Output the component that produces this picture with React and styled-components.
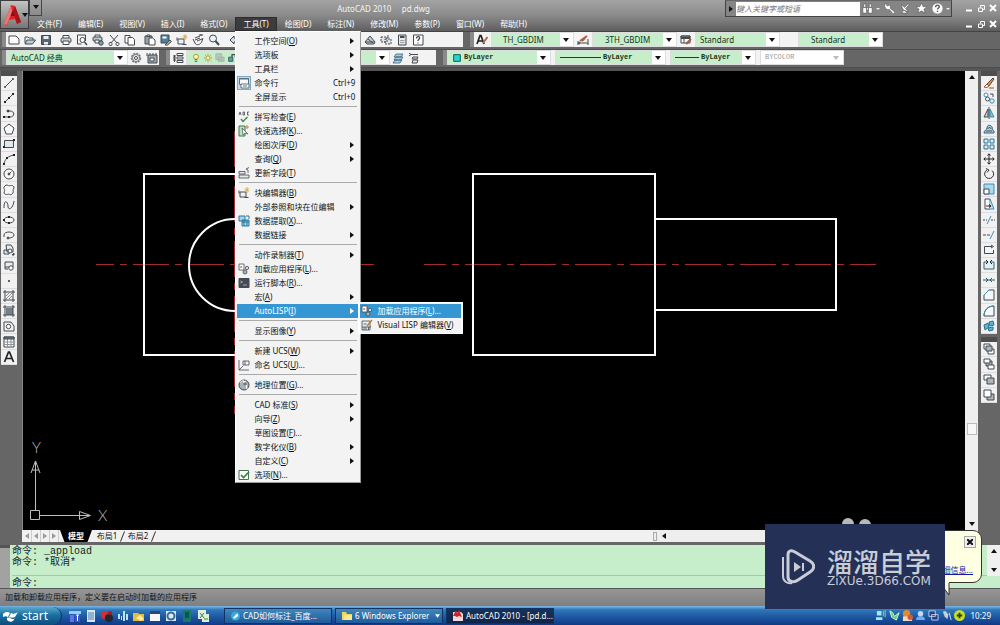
import React from "react";
import styled, { createGlobalStyle, css } from "styled-components";

const ui = '"Noto Sans", "Noto Sans CJK SC", sans-serif';
const mono = '"Liberation Mono", "Noto Sans CJK SC", monospace';
const green = "#c6eecb";
const gray = "#666666";

const GlobalStyle = createGlobalStyle`
  * { box-sizing: border-box; }
  body { margin: 0; background: ${gray}; font: 8px/14px ${ui}; color: #111; }
  button, input, select { font: inherit; color: inherit; border: 0; padding: 0; margin: 0; background: none; border-radius: 0; }
  ul { list-style: none; margin: 0; padding: 0; }
  svg { display: block; flex: none; }
`;

/* ---------- icons, each on a 12 x 12 grid ---------- */
const D = "#454a50";
const B = "#3d8fb8";
const icons = {
  new: <path d="M1 2h7l3 3v5H1z" fill="#fff" />,
  open: <><path d="M1 9V3h3l1 1h4v2" fill="none" /><path d="M1 10l2-4h8.500l-3 4z" fill="#b9cfdd" /></>,
  save: <><path d="M1.500 1.500h9v9h-9z" fill="#5b6670" /><path d="M3.500 2h5v3h-5zM4 8h4v2.500H4z" fill="#e8eef2" stroke="none" /></>,
  print: <><path d="M3 4V1.500h6V4" fill="#fff" /><rect x="1" y="4" width="10" height="4.500" rx="1.500" fill="#c9d0d4" /><path d="M3 7h6v3.500H3z" fill="#fff" /></>,
  preview: <><path d="M1.500 1h8v6M1.500 1v9h4" fill="none" /><circle cx="6.500" cy="6" r="2.500" fill="#fff" /><path d="M8.500 8l2.500 3" strokeWidth="1.500" /></>,
  publish: <><path d="M3 3V1h5v2" fill="#fff" /><rect x="1" y="3" width="9" height="4" rx="1" fill="#bcc6cc" /><path d="M3 6h4v3H3z" fill="#fff" /><circle cx="9" cy="9" r="2.200" fill="#6fa7bd" /></>,
  cut: <path d="M2 1l7 8M10 1L3 9M1 10.500a1.500 1.500 0 103-1 1.500 1.500 0 10-3 1M8 9.500a1.500 1.500 0 103 1 1.500 1.500 0 10-3-1" fill="none" />,
  copy: <><path d="M1 1.500h5v7.500H1z" fill="#fff" /><path d="M4 3.500h4.500l2 2V11H4z" fill="#fff" /></>,
  paste: <><path d="M1 2h7v8H1z" fill="#9aa4a8" /><path d="M3 1h3v1.500H3z" fill="#fff" /><path d="M5 4h3.500l2.500 2v5H5z" fill="#fff" /></>,
  match: <><path d="M1 1h8v8H1z" fill="#4c7fa0" /><path d="M2.500 2.500h4v2h-4z" fill="#fff" stroke="none" /><path d="M5 11l5-5 1.500 1.500-4 3.500z" fill="#d9b96c" /></>,
  block: <><path d="M2 5h6v5H2zM1 3.500v3M6.500 10.500h4" fill="#eef1f2" /><path d="M9 0v6M6.500 3h5M7.500 1l3 4M10.500 1l-3 4" stroke="#dca647" strokeWidth=".8" /></>,
  hand: <path d="M1 5l2 4c1 3 6 2 7-2l1-3M3 6l5-2M3 4l5-2M5 7l5-2M7 1h4M9 0v2" fill="none" />,
  zoom: <><circle cx="5" cy="4.500" r="3.500" fill="#e8f3f8" /><path d="M7.500 7l3.500 4" strokeWidth="2" /></>,
  undo: <path d="M6 2L2 6l4 4V8h4V4H6z" fill="#d0dde4" />,
  sheets: <><path d="M1 8l5-6 5 6-1 2H3z" fill="#c2cbce" /><path d="M1 8h9M4 5l5 4" fill="none" /></>,
  markup: <><path d="M1 3h6v5H1zM5 5h6v5H5z" fill="#dfe5e8" strokeDasharray="2 1" /><path d="M8 1v3" /></>,
  calc: <><path d="M2.500 1h7.500v10H2.500z" fill="#e5e9ea" /><path d="M4 3h4.500" strokeWidth="2" /><path d="M4 6.500h4.500M4 8.500h4.500" stroke="#9aa0a4" /></>,
  help: <><path d="M1.500 1h9.500v10H1.500z" fill="#fff" /><path d="M4.500 4.500c0-3 4-2 3 0L6 6.500V7M6 8.500v1" fill="none" strokeWidth="1.300" /></>,
  textstyle: <><path d="M1 10L4 1.500h1L8 10M2.500 7h4" fill="none" strokeWidth="1.700" stroke="#222" /><path d="M7 9l4.500-6" stroke="#b3703c" strokeWidth="2" /></>,
  dimstyle: <><path d="M1 7v4M11 5v6M1 9h10M1 9l2-1M1 9l2 1" fill="none" /><path d="M3 7l7-5M5 7l3-3" stroke="#b05e42" strokeWidth="2" /></>,
  tablestyle: <><path d="M1 2h9v7H1zM1 4.500h9M4 4v5" fill="#fff" /><path d="M1 2h9v1.500H1z" fill="#7d868b" /><path d="M6 10l5-5" stroke="#9a613f" strokeWidth="2" /></>,
  gear: <><circle cx="6" cy="6" r="4.500" fill="#ddd" strokeWidth="1.500" stroke="#777c80" strokeDasharray="2 1" /><circle cx="6" cy="6" r="3.500" fill="#f4f4f4" strokeWidth=".7" /><circle cx="6" cy="6" r="1.500" fill="#fff" /></>,
  workspace: <><path d="M2 3h9v8H2z" fill="#9da9ae" /><path d="M1 1v3M4 1v2M7 1v2M10 1v2M4 6h4v3H4z" fill="#fff" /></>,
  layers: <><path d="M5 1.500h6v2H5zM5 5h6v2H5zM5 8.500h6v2H5z" fill="#fff" /><path d="M1 4h3M1 6h3M1 8h3M2.500 3v7" /></>,
  layerprev: <><path d="M4 2h7l-2 3H2zM4 5h7l-2 3H2zM3 8h7l-2 3H1z" fill="#a9cddd" stroke="#35627b" strokeWidth=".8" /></>,
  layerstate: <path d="M1 1l2 1.500L1 4M3 2.500h7M5 5h5l-1 2H4zM5 8h5l-1 3H4z" fill="#e3e8ea" />,
  bulb: <><circle cx="6" cy="4.500" r="3" fill="#fff3a6" stroke="#a08a3c" /><path d="M4.500 8h3M4.500 10h3" /></>,
  sun: <><circle cx="6" cy="6" r="2.500" fill="#fff09a" stroke="#ad8b35" /><path d="M6 1v1.500M6 9.500V11M1 6h1.500M9.500 6H11M2.500 2.500l1 1M9 9l1 1M9.500 2.500l-1 1M2.500 9.500l1-1" stroke="#ad8b35" /></>,
  freeze: <path d="M1 1h7v7H1zM4 5h7v5H4z" fill="#b7c9ba" stroke="#a5afa8" />,
  lock: <><path d="M2 5h5v5H2z" fill="#4da5b5" /><path d="M6 5V2h4v3" fill="none" strokeWidth="1.500" /></>,
  cyan: <path d="M2 2h8v8H2z" fill="#25d6d0" stroke="#063f40" />,
  line: <><path d="M2 10l8-8" /><circle cx="2" cy="10" r="1" fill={D} stroke="none" /><circle cx="10" cy="2" r="1" fill={D} stroke="none" /></>,
  xline: <><path d="M1 11L11 1" /><path d="M1 9h2v2H1zM5 5h2v2H5zM9 1h2v2H9z" fill="#222" stroke="none" /></>,
  pline: <><path d="M1 9h6c5 0 5-6 0-6H5" fill="none" /><path d="M0 8h2v2H0zM5 8h2v2H5z" fill="#222" stroke="none" /><circle cx="5" cy="3" r="1" /></>,
  polygon: <path d="M6 1l5 4-2 6H3L1 5z" fill="#f8fafa" />,
  rect: <><path d="M1.500 2.500h9v7h-9z" fill="#dfe8ea" /><path d="M0 8h2v2H0zM10 1h2v2h-2z" fill="#222" stroke="none" /></>,
  arc: <><path d="M1 11c1-5 4-8 10-9" fill="none" /><path d="M0 10h2v2H0zM3 4h2v2H3zM10 1h2v2h-2z" fill="#222" stroke="none" /></>,
  circle: <><circle cx="6" cy="6" r="5" fill="#fafafa" /><circle cx="6" cy="6" r="1" fill={D} /><path d="M6 6l2.500-2.500" /></>,
  cloud: <path d="M3 1c2 0 3 1 3 1s5-2 5 2c-2 2 0 3-1 5-2 3-4 1-4 1s-5 2-5-2c2-2-1-3 0-5z" fill="#f6f6f6" />,
  spline: <path d="M1 9c0-10 4-6 4-2 0 5 5 3 6-5" fill="none" />,
  ellipse: <><ellipse cx="6" cy="6" rx="5" ry="3" fill="#f4f6f8" /><path d="M5 2h2v2H5zM0 5h2v2H0zM5 8h2v2H5z" fill="#222" stroke="none" /></>,
  ellarc: <><path d="M1 6c0-4 10-4 10 0 0 2-3 3-5 3M1 6v2" fill="none" /><circle cx="5" cy="9" r="1" fill="#777" /></>,
  insert: <><path d="M3 1h5l2 3v4H4zM1 6h5v4H1z" fill="#e7edef" /><circle cx="7" cy="7" r="2" fill="#fff" /><path d="M9 11h2V9z" fill="#111" /></>,
  makeblock: <><path d="M2 2h8v5H2zM2 7v2h3" fill="#e7edef" /><circle cx="8" cy="8" r="2.200" fill="#fff" /></>,
  point: <circle cx="6" cy="6" r=".7" fill={D} />,
  hatch: <><path d="M2 0v12M10 0v12M0 2h12M0 10h12" fill="none" /><path d="M3 9l6-6M3 6l3-3M6 9l3-3" stroke="#8a9095" /></>,
  gradient: <><path d="M3 3h7v7H3z" fill="#788085" stroke="none" /><path d="M2 0v12M10 0v12M0 2h12M0 10h12" fill="none" /></>,
  region: <><path d="M1 2h7l3 4v5H1z" fill="#f2f4f4" /><circle cx="5.500" cy="6.500" r="2.200" fill="#fff" /></>,
  table: <><path d="M1 1h10v10H1z" fill="#fff" /><path d="M1 6h10M1 8.500h10M4.500 3v8M8 3v8" stroke="#8d959a" /><path d="M1 1h10v2H1z" fill="#6f7b82" /></>,
  text: <path d="M1.500 11L5.500 1h1l4 10M3 7.500h6" fill="none" stroke="#222" strokeWidth="1.700" />,
  erase: <><path d="M4 7l6-6 1 1-5 7z" fill="#c99d67" stroke="#6b4023" /><path d="M1 10l3-3 2 2-2 1.500zM6 11h5" fill="#fff" stroke="#9b4b31" /></>,
  dupe: <><circle cx="3" cy="3" r="2" fill="#fff" stroke={B} /><circle cx="4.500" cy="7" r="2" fill="#fff" /><circle cx="9" cy="9" r="2.200" fill="#d8eef7" stroke={B} /><path d="M7 2h3v3" fill="none" /></>,
  mirror: <><path d="M5 2v8H1z" fill="#ccd3d6" /><path d="M7 2v8h4z" fill="#85c0d8" stroke={B} /><path d="M6 0v12" /></>,
  offset: <><path d="M1 10h10V8c-2 0-1-2-2-4S4 1 4 5c0 2-3 2-3 5z" fill="#a9cfdd" stroke="#386378" /><path d="M3 8h6M5 6c0-2 3-2 3 0" fill="none" /></>,
  array: <path d="M1 1h4v4H1zM7 1h4v4H7zM1 7h4v4H1zM7 7h4v4H7z" fill="#d5ecf4" stroke="#2f7798" />,
  move: <path d="M6 1v10M1 6h10M4.500 2.500L6 .8l1.500 1.700M4.500 9.500L6 11.200l1.500-1.700M2.500 4.500L.8 6l1.700 1.500M9.500 4.500L11.200 6 9.500 7.500" fill="none" stroke="#222" />,
  rotate: <path d="M4 2a4.500 4.500 0 105 .5M3 .5l3 1.500-2 2.500" fill="none" stroke="#333" />,
  scale: <><path d="M1 1h10v10H1z" fill="#a9d9ec" stroke={B} /><path d="M1 6h5v5H1z" fill="#fff" /></>,
  stretch: <><path d="M2 1h5v10H2z" fill="#fff" /><path d="M7 1l4 10H6" fill="#bfe2ef" stroke={B} /><path d="M3 8h5M6 6.500L8 8 6 9.500" fill="none" stroke="#222" /></>,
  trim: <><path d="M0 6h4M8 6h4" stroke={D} strokeDasharray="2 1" /><path d="M4 10l4-8" stroke={B} /></>,
  extend: <><path d="M0 6h7" strokeDasharray="3 1" /><path d="M7 10l4-8" stroke={B} /></>,
  breakpt: <path d="M9 2.500H1.500v7h9V6M8 1l2.500 1.500L8 4" fill="#eef6f9" />,
  brk: <><path d="M4 3H1v7h10V3H8" fill="#dff0f6" stroke="#43606e" /><path d="M3 1l2 2-2 2M9 1L7 3l2 2" fill="none" stroke="#222" /></>,
  join: <path d="M0 6h12M3 4l2 2-2 2M9 4L7 6l2 2" fill="none" stroke="#235b77" />,
  chamfer: <><path d="M1 11V6l5-5h5v10z" fill="#f3f8fa" /><path d="M1 6l5-5" stroke={B} /></>,
  fillet: <><path d="M1 11c0-6 4-10 10-10v10z" fill="#f3f8fa" /><path d="M1 11C1 5 5 1 11 1" fill="none" stroke={B} /></>,
  explode: <><path d="M1 5l4-2 1 4-4 3zM6 2l4-1 1 4-4 1zM5 8l5-1v3l-4 1z" fill="#62b3d2" stroke="#286f90" /></>,
  front: <><path d="M1 1h6v5H1zM5 6h6v5H5z" fill="#fff" /><path d="M3 3h6v5H3z" fill="#aeb6ba" /></>,
  back: <><path d="M3 3h6v5H3z" fill="#aeb6ba" /><path d="M1 1h6v4H1zM5 7h6v4H5z" fill="#fff" /></>,
  above: <><path d="M1 1h7v5H1z" fill="#fff" /><path d="M4 4h7v6H4z" fill="#aeb6ba" /></>,
  under: <><path d="M4 5h7v6H4z" fill="#aeb6ba" /><path d="M1 1h7v7H1z" fill="#fff" /></>,
  cmdline: <><path d="M1.500 1.500h9v6h-9z" fill="#f4f8fa" stroke="#5d7380" /><path d="M1 1h10v1.500H1z" fill="#5d7380" stroke="none" /><path d="M3 7h8v4H3z" fill="#fff" stroke="#5d7380" /><path d="M5 9h4" stroke="#5d7380" /></>,
  spell: <><path d="M3 8l2 2.500L9.500 6" fill="none" stroke="#438b46" strokeWidth="1.500" /><path d="M1 4l1-3 1 3M5 1h1.500v3H5zM11 1H9.500v3H11" fill="none" strokeWidth=".8" /></>,
  quick: <><path d="M1 1h6v10H1z" fill="#b9e4c0" stroke="#377b4c" /><path d="M4 3l1 7 2-2 3 1z" fill="#fff" strokeWidth=".7" /><path d="M9 0v4M7 2h4" stroke="#c88c2d" /></>,
  update: <path d="M1 4.500h6v2.500H1zM1 8h10v3H1zM10 6V3L8 2l3-1.500" fill="#e5e9eb" strokeWidth=".8" />,
  extract: <><path d="M1 1h6v5H1zM4 5h7v6H4z" fill="#a4d4ea" stroke="#2878a0" /><path d="M4 7h7M6 5v6M9 5v6M8 1h3v3" fill="none" stroke="#2878a0" /></>,
  loadapp: <><path d="M1 1h5v6H1z" fill="#fff" strokeWidth=".8" /><path d="M2.500 3l2 1-2 1z" fill={D} stroke="none" /><circle cx="9" cy="5" r="1.700" fill="#d5dce0" strokeWidth=".8" /><circle cx="7" cy="9" r="2" fill="#aab4ba" strokeWidth=".8" /></>,
  script: <><path d="M1 1.500h10v9H1z" fill="#454b50" /><path d="M2.500 4l2 1-2 1M5 8h4" fill="none" stroke="#bbb" strokeWidth=".8" /></>,
  ucs: <path d="M1 1v10h10M1 11l4-4M5 2h6v4H5zM7 2v4" fill="none" strokeWidth=".8" />,
  geo: <><circle cx="6" cy="6" r="5" fill="#a7b5b8" /><path d="M2 4c2-4 6-2 4 0l2 2 1 4M5 3l3-1" fill="none" stroke="#fff" /><circle cx="7" cy="5" r="1" fill="#fff" /></>,
  options: <><path d="M1 1.500h9.500v9H1z" fill="#f8fff8" stroke="#4c6f52" /><path d="M3 6l2.500 2.500L11 3" fill="none" stroke="#268636" strokeWidth="1.600" /></>,
  vlisp: <><path d="M1 2h8v9H1z" fill="#e9ecef" strokeWidth=".8" /><path d="M1 8h9M3 8v3M5 8v3M7.500 8v3M2.500 5h3" strokeWidth=".8" /><path d="M6 7l5-6" stroke="#b68231" strokeWidth="1.500" /></>,
};

const Icon = ({ name, size = 12 }) => (
  <svg width={size} height={size} viewBox="0 0 12 12" stroke={D} strokeWidth="1" aria-hidden="true">
    {icons[name]}
  </svg>
);
const Arrow = ({ dir = "down", color = "#111" }) => {
  const d = { down: "M0 1h6L3 5z", right: "M1 0v6l4-3z", left: "M5 0v6L1 3z", up: "M0 5h6L3 1z" }[dir];
  return <svg width="6" height="6" viewBox="0 0 6 6" aria-hidden="true"><path d={d} fill={color} /></svg>;
};

/* ---------- page ---------- */
const Page = styled.div`
  position: relative;
  display: flex;
  flex-direction: column;
  min-height: 100vh;
  overflow: hidden;
`;

/* ---------- header ---------- */
const Header = styled.header`
  position: relative;
  z-index: 5;
  display: flex;
  background: linear-gradient(#a3a3a3, #8a8a8a 50%, #5e5e5e);
  border-bottom: 1px solid #444;
`;
const AppButton = styled.button`
  width: 29px;
  height: 29px;
  display: grid;
  grid-template-columns: 18px 6px;
  align-items: center;
  gap: 1px;
  padding-left: 2px;
  background: linear-gradient(#c3c3c3, #777);
  border: 1px solid #3d3d3d;
`;
const HeaderRows = styled.div`flex: 1; min-width: 0;`;
const TitleRow = styled.div`display: flex; height: 17px; align-items: flex-start;`;
const QuickButton = styled.button`
  width: 13px;
  height: 16px;
  display: flex;
  justify-content: center;
  padding-top: 4px;
  border: 1px solid #444;
  border-top: 0;
`;
const Title = styled.h1`
  flex: 1;
  margin: 0;
  text-align: center;
  font: 400 8px/17px ${ui};
  color: #f4f4f4;
  white-space: pre;
`;
const InfoCenter = styled.div`
  display: flex;
  height: 17px;
  width: 227px;
  align-items: center;
  background: #858585;
  border: 1px solid #444;
  border-top-color: #666;
`;
const InfoToggle = styled.button`width: 10px; display: flex; justify-content: center;`;
const Search = styled.input`
  flex: 1;
  min-width: 0;
  height: 14px;
  background: #fff;
  &::placeholder { color: #777; font-style: italic; opacity: 1; }
`;
const InfoIcons = styled.div`display: flex; align-items: center; gap: 4px; padding: 0 1px 0 2px;`;
const InfoButton = styled.button`
  width: ${(p) => (p.$more ? 18 : 12)}px;
  height: 14px;
  display: flex;
  align-items: center;
  gap: 3px;
  ${(p) => p.$more && css`&::after { content: ""; border: 2px solid transparent; border-top-color: #eee; border-bottom: 0; }`}
`;
const WindowButtons = styled.div`
  display: flex;
  align-items: center;
  gap: 2px;
  height: 17px;
  margin-left: 12px;
  padding-right: 2px;
`;
const WindowButton = styled.button`width: 10px; height: 12px; display: grid; place-items: center;`;
const MenuRow = styled.div`display: flex; justify-content: space-between; height: 14px; align-items: center;`;
const MenuBar = styled.ul`display: flex;`;
const MenuBarItem = styled.li`position: relative;`;
const MenuBarButton = styled.button`
  height: 14px;
  padding: 0 8px;
  color: #fff;
  line-height: 14px;
  white-space: nowrap;
  ${(p) => p.$open && css`background: #3c3c3c; box-shadow: inset 0 0 0 1px #2c2c2c;`}
`;

/* ---------- menus ---------- */
const Menu = styled.ul`
  position: absolute;
  top: 100%;
  left: 0;
  width: 126px;
  padding: 2px 1px 0;
  background: #f3f3f3;
  border: 1px solid #fff;
  border-right-color: #999;
  border-bottom-color: #999;
`;
const Submenu = styled(Menu)`
  top: -2px;
  left: 121px;
  width: 105px;
  padding: 1px 0;
  border-width: 1px 2px;
  border-color: #fff;
`;
const MenuItem = styled.li`position: relative;`;
const MenuButton = styled.button`
  display: grid;
  grid-template-columns: 12px 1fr auto;
  column-gap: 4px;
  align-items: center;
  width: 100%;
  height: 14px;
  padding: 0 4px 0 1px;
  text-align: left;
  line-height: 14px;
  white-space: nowrap;
  ${(p) => p.$active && css`background: #3497d3; color: #fff;`}
`;
const MenuIcon = styled.span`
  width: 12px;
  height: 12px;
  ${(p) => p.$checked && css`background: #c5dce8; outline: 1px solid #7da9c2;`}
`;
const Separator = styled.li`height: 6px; padding: 2px 2px 0; &::before { content: ""; display: block; height: 1px; background: #aaa; }`;

const parseLabel = (label) => {
  const at = label.indexOf("&");
  if (at < 0) return label;
  return <span>{label.slice(0, at)}<u>{label[at + 1]}</u>{label.slice(at + 2)}</span>;
};

const toolsMenu = [
  { t: "工作空间(&O)", sub: true }, { t: "选项板", sub: true }, { t: "工具栏", sub: true },
  { t: "命令行", icon: "cmdline", key: "Ctrl+9", checked: true }, { t: "全屏显示", key: "Ctrl+0" }, null,
  { t: "拼写检查(&E)", icon: "spell" }, { t: "快速选择(&K)...", icon: "quick" }, { t: "绘图次序(&D)", sub: true },
  { t: "查询(&Q)", sub: true }, { t: "更新字段(&T)", icon: "update" }, null,
  { t: "块编辑器(&B)", icon: "block" }, { t: "外部参照和块在位编辑", sub: true },
  { t: "数据提取(&X)...", icon: "extract" }, { t: "数据链接", sub: true }, null,
  { t: "动作录制器(&T)", sub: true }, { t: "加载应用程序(&L)...", icon: "loadapp" },
  { t: "运行脚本(&R)...", icon: "script" }, { t: "宏(&A)", sub: true },
  { t: "AutoLISP(&I)", sub: true, active: true, items: [
    { t: "加载应用程序(&L)...", icon: "loadapp", active: true }, { t: "Visual LISP 编辑器(&V)", icon: "vlisp" },
  ] }, null,
  { t: "显示图像(&Y)", sub: true }, null,
  { t: "新建 UCS(&W)", sub: true }, { t: "命名 UCS(&U)...", icon: "ucs" }, null,
  { t: "地理位置(&G)...", icon: "geo" }, null,
  { t: "CAD 标准(&S)", sub: true }, { t: "向导(&Z)", sub: true }, { t: "草图设置(&F)..." },
  { t: "数字化仪(&B)", sub: true }, { t: "自定义(&C)", sub: true }, { t: "选项(&N)...", icon: "options" },
];

const MenuEntries = ({ items }) => items.map((m, i) => m ? (
  <MenuItem key={i}>
    <MenuButton $active={m.active}>
      <MenuIcon $checked={m.checked}>{m.icon && <Icon name={m.icon} />}</MenuIcon>
      {parseLabel(m.t)}
      {m.sub ? <Arrow dir="right" color={m.active ? "#fff" : "#111"} /> : m.key ? <span>{m.key}</span> : null}
    </MenuButton>
    {m.items && <Submenu><MenuEntries items={m.items} /></Submenu>}
  </MenuItem>
) : <Separator key={i} />);

const menus = ["文件(F)", "编辑(E)", "视图(V)", "插入(I)", "格式(O)", "工具(T)", "绘图(D)", "标注(N)", "修改(M)", "参数(P)", "窗口(W)", "帮助(H)"];

const WindowControls = () => (
  <WindowButtons>
    {["M1 6.500h6", "M1.500 4h4v3.500h-4zM3.500 3.500V1.500h4v4H6", "M1 1l6 6M7 1L1 7"].map((d, i) => (
      <WindowButton key={d} aria-label={["最小化", "还原", "关闭"][i]}>
        <svg width="9" height="9" viewBox="0 0 9 9" fill="none" stroke="#fff" strokeWidth={i === 1 ? 1 : 2}><path d={d} /></svg>
      </WindowButton>
    ))}
  </WindowButtons>
);

const infoPaths = [
  <path key="b" d="M1 5h4v6H1zM7 5h4v6H7zM2 1h2v4H2zM8 1h2v4H8zM5 5h2v3H5z" />,
  <path key="k" d="M1 1l2 0 0 2 2 0 1-1c2 3 0 3 1 4l5 4-2 2-4-5C3 8 0 5 1 1z" />,
  <path key="d" d="M2 2c0 5 3 7 7 7L6 6l4-4-1-1-4 4zM4 8l-2 3h6L6 9z" />,
  <path key="s" d="M6 0l1.700 4H12L8.600 6.700 10 11 6 8.500 2 11l1.400-4.300L0 4h4.300z" />,
  <g key="h"><circle cx="6" cy="6" r="6" /><path d="M4 4.500c0-3 4-2.500 4-.5C8 5.500 6 5.500 6 7M6 8.500v1.300" fill="none" stroke="#555" strokeWidth="1.500" /></g>,
];

/* ---------- toolbars ---------- */
const ToolbarRow = styled.div`
  display: flex;
  height: 18px;
  padding: 0 0 2px 2px;
  gap: 7px;
  overflow: hidden;
  border-bottom: 1px solid #4c4c4c;
`;
const Toolbar = styled.div`
  display: flex;
  flex: none;
  align-items: center;
  gap: ${(p) => p.$gap || 0}px;
  width: ${(p) => p.$width}px;
  background: #f3f3f3;
  border-left: 4px solid #8a8a8a;
`;
const ToolButton = styled.button`
  width: 16px;
  height: 15px;
  flex: none;
  display: grid;
  place-items: center;
`;
const ToolGap = styled.span`width: 4px; flex: none;`;
const Combo = styled.div`
  display: flex;
  align-items: center;
  flex: none;
  gap: 2px;
  width: ${(p) => p.$width}px;
  height: 15px;
  padding: 0 4px;
  border: 1px solid #ddd;
  color: ${(p) => (p.$off ? "#999" : "#1a331d")};
  background: ${(p) => (p.$off ? "#fff" : `linear-gradient(to left, #fff 13px, ${green} 13px)`)};
`;
const ComboSelect = styled.select`
  appearance: none;
  flex: 1;
  min-width: 0;
  height: 13px;
  line-height: 13px;
  padding-left: ${(p) => p.$indent || 0}px;
  opacity: 1;
  ${(p) => p.$serif && css`font: 7px/13px "Liberation Mono", monospace; font-weight: ${p.disabled ? 400 : 700};`}
`;
const Select = ({ width, value, indent, serif, off, label, children }) => (
  <Combo $width={width} $off={off}>
    {children}
    <ComboSelect aria-label={label} $indent={indent} $serif={serif} disabled={off} defaultValue={value}>
      <option>{value}</option>
    </ComboSelect>
    <Arrow color={off ? "#bbb" : "#111"} />
  </Combo>
);
const LinePreview = ({ width }) => <svg width={width} height="3"><path d={`M0 1.500H${width}`} stroke="#333" /></svg>;
const Tools = ({ names }) => names.map((n, i) => n === "|" ? <ToolGap key={i} /> : <ToolButton key={i} aria-label={n}><Icon name={n} /></ToolButton>);

/* ---------- workspace ---------- */
const Workspace = styled.main`display: flex; flex: 1; min-height: 420px; border-top: 3px solid #555;`;
const Dock = styled.aside`
  width: 22px;
  flex: none;
  display: flex;
  flex-direction: column;
  gap: 3px;
  padding: 0 ${(p) => (p.$right ? "3px 0 3px" : "5px 0 1px")};
  background: ${gray};
`;
const Palette = styled.div`
  display: flex;
  flex-direction: column;
  height: ${(p) => p.$length}px;
  border-top: 5px solid #4e4e4e;
  background: #f1f1f1;
`;
const PaletteButton = styled.button`
  flex: 1;
  display: grid;
  place-items: center;
  border-bottom: 1px solid #ddd;
`;
const DrawingPane = styled.section`flex: 1; min-width: 0; display: flex; flex-direction: column;`;
const DrawingRow = styled.div`flex: 1; display: flex;`;
const Canvas = styled.svg`flex: 1; min-width: 0; background: #000; border-left: 1px solid #888;`;
const VScroll = styled.div`
  width: 13px;
  flex: none;
  display: flex;
  flex-direction: column;
  align-items: center;
  justify-content: space-between;
  padding: 3px 0;
  background: #efefef;
`;
const VThumb = styled.span`
  width: 10px;
  height: 12px;
  margin-top: auto;
  margin-bottom: 86px;
  background: #f8f8f8;
  border: 1px solid #bbb;
`;
const LayoutBar = styled.div`
  display: flex;
  height: 12px;
  align-items: center;
  background: #f1f1f1;
`;
const TabNav = styled.div`display: flex; padding: 0 1px; width: 38px;`;
const TabNavButton = styled.button`
  width: 9px;
  height: 12px;
  display: grid;
  place-items: center;
  border-right: 1px solid #ccc;
`;
const LayoutTab = styled.button`
  height: 12px;
  line-height: 12px;
  width: 30px;
  ${(p) => p.$active && css`
    width: 32px;
    color: #fff;
    font-weight: 700;
    background: #000;
    clip-path: polygon(0 0, 100% 0, 86% 100%, 14% 100%);
  `}
`;
const TabSlash = styled.span`width: 1px; height: 11px; background: #333; transform: rotate(22deg);`;
const HScroll = styled.div`
  margin-left: auto;
  display: flex;
  align-items: center;
  gap: 4px;
  width: 34%;
  height: 12px;
  background: #eee;
`;
const Splitter = styled.span`width: 4px; height: 9px; border: 1px solid #aaa;`;

/* ---------- command window ---------- */
const CommandWindow = styled.section`
  display: flex;
  margin-top: 3px;
  height: 44px;
  background: ${green};
  border-bottom: 1px solid #555;
`;
const CommandGrip = styled.div`width: 10px; flex: none; background: linear-gradient(#555 3px, #a2a2a2 3px);`;
const CommandBody = styled.div`flex: 1; min-width: 0; padding-left: 2px; font: 10px/11px ${mono}; color: #222;`;
const History = styled.div`height: 31px; padding-top: 1px; border-bottom: 1px solid #a7c9ab; white-space: pre;`;
const CommandLine = styled.label`display: flex; height: 14px; align-items: center;`;
const CommandInput = styled.input`flex: 1; min-width: 0; height: 12px; padding-left: 6px;`;
const CommandScroll = styled.div`
  width: 13px;
  display: flex;
  flex-direction: column;
  justify-content: space-between;
  align-items: center;
  height: 31px;
  padding: 3px 0;
  background: #f0f0f0;
`;
const StatusBar = styled.footer`
  height: 17px;
  padding-left: 5px;
  line-height: 16px;
  background: linear-gradient(#969696, #7f7f7f);
  color: #111;
`;

/* ---------- taskbar ---------- */
const Taskbar = styled.nav`
  display: flex;
  align-items: center;
  height: 19px;
  background: linear-gradient(#7db8e4, #2f77ba 20%, #1c559f 60%, #113a86);
  color: #fff;
`;
const Start = styled.button`
  display: flex;
  align-items: center;
  gap: 4px;
  width: 62px;
  height: 18px;
  padding-left: 3px;
  border-radius: 0 9px 9px 0;
  background: linear-gradient(#5aa8cc, #1a6ea1 45%, #0d4d7e);
  border-right: 1px solid #0c3158;
  font: 12px/14px ${ui};
`;
const QuickLaunch = styled.div`display: flex; gap: 4px; width: 162px; padding-left: 7px;`;
const LaunchButton = styled.button`width: 12px; height: 12px;`;
const Tasks = styled.div`display: flex; gap: 3px; flex: 1; min-width: 0;`;
const Task = styled.button`
  display: flex;
  align-items: center;
  gap: 3px;
  width: 108px;
  height: 16px;
  padding: 0 2px 0 6px;
  border: 1px solid #123465;
  background: ${(p) => (p.$active ? "linear-gradient(#173258, #0f2448)" : "linear-gradient(#4087bd, #1f5a9a)")};
  white-space: nowrap;
  & > svg:last-child { margin-left: auto; }
`;
const Tray = styled.div`display: flex; align-items: center; gap: 2px; padding-right: 9px;`;
const Clock = styled.time`padding-left: 4px;`;

/* ---------- overlays ---------- */
const Balloon = styled.aside`
  position: absolute;
  z-index: 6;
  right: 18px;
  bottom: 42px;
  width: 60px;
  height: 53px;
  display: flex;
  flex-direction: column;
  align-items: flex-end;
  justify-content: space-between;
  padding: 5px;
  background: #ffffe1;
  border: 1px solid #333;
  border-radius: 9px;
`;
const BalloonClose = styled.button`
  width: 12px;
  height: 12px;
  display: grid;
  place-items: center;
  background: #eee;
  border: 1px solid #aaa;
`;
const BalloonLink = styled.a`color: #1717a8; padding-right: 3px; white-space: nowrap;`;
const BalloonTail = styled.svg`position: absolute; top: 51px; right: 30px;`;
const Bumps = styled.svg`position: absolute; z-index: 6; right: 128px; bottom: 97px;`;
const Brand = styled.div`
  position: absolute;
  z-index: 7;
  right: 55px;
  bottom: 16px;
  width: 180px;
  height: 85px;
  display: flex;
  align-items: center;
  gap: 12px;
  padding-left: 15px;
  background: #243056;
  color: #c9cdd7;
`;
const BrandText = styled.div`display: flex; flex-direction: column;`;
const BrandName = styled.strong`font: 500 26px/28px "Noto Sans CJK SC", sans-serif;`;
const BrandUrl = styled.span`font: 12px/12px "DejaVu Sans", sans-serif;`;

const drawTools = ["line", "xline", "pline", "polygon", "rect", "arc", "circle", "cloud", "spline", "ellipse", "ellarc", "insert", "makeblock", "point", "hatch", "gradient", "region", "table", "text"];
const modifyTools = ["erase", "dupe", "mirror", "offset", "array", "move", "rotate", "scale", "stretch", "trim", "extend", "breakpt", "brk", "join", "chamfer", "fillet", "explode"];
const orderTools = ["front", "back", "above", "under"];

const ToolPalette = ({ names, length }) => (
  <Palette $length={length}>
    {names.map((n) => <PaletteButton key={n} aria-label={n}><Icon name={n} /></PaletteButton>)}
  </Palette>
);

const launchers = [
  <g key="1"><path d="M0 1h12v3H0z" fill="#8fd0f4" /><path d="M1 5h4v7H1z" fill="#6a6df0" /><path d="M6 4h5v8H6z" fill="#3159d1" /><path d="M7 5h3M8.500 5v6" stroke="#fff" /></g>,
  <g key="2"><path d="M2 0h8v12H2z" fill="#d6e7f5" /><path d="M3 3h6M3 5h6M3 7h6M3 9h6" stroke="#4a7fae" /></g>,
  <g key="3"><circle cx="4" cy="5" r="4" fill="#d92c34" /><circle cx="8" cy="8" r="4" fill="#23262e" /><circle cx="9" cy="3" r="2" fill="#a31c24" /></g>,
  <path key="4" d="M1 4h2v5H1zM4 6h1v4H4zM6 1h2v10H6zM9 4h2v6H9z" fill="#b9e5fb" />,
  <g key="5"><path d="M0 3h5l1 1h5v7H0z" fill="#e7bd41" /><path d="M3 8l4-3 4 4-3 2z" fill="#ffef9b" /></g>,
  <g key="6"><path d="M1 1h10v10H1z" fill="#f7f7f7" /><path d="M1 1h10v3H1z" fill="#274b73" /></g>,
  <g key="7"><path d="M1 1h10v10H1z" fill="#dce9f0" /><circle cx="6" cy="6" r="3.500" fill="none" stroke="#366d97" strokeWidth="2" /></g>,
  <g key="8"><path d="M2 0h8v12H2z" fill="#16796e" /><path d="M4 2h4v6H4z" fill="#0b5750" /></g>,
  <g key="9"><path d="M1 0h8v9H1zM5 4h7v8H5z" fill="#dfeedd" /><path d="M3 3l4 5M7 3L3 8M7 9h4" stroke="#34843c" /></g>,
];
const trayIcons = [
  <g key="1"><path d="M1 1h5v5H1zM0 8h7v3H0z" fill="#a9e6f5" /><path d="M8 1v6M10 0v8" stroke="#7ee39b" /></g>,
  <path key="2" d="M1 1l3 2 2 4 5-4-3 8-5-3z" fill="#67c973" stroke="#d6ffe0" />,
  <g key="3"><circle cx="5" cy="4" r="4" fill="#e68a32" /><path d="M1 7h10v5H1z" fill="#f0dcbb" /><circle cx="9" cy="8" r="3" fill="#d4583b" /></g>,
  <g key="4"><circle cx="6" cy="4" r="3" fill="#bedaf5" /><path d="M1 11c0-6 10-6 10 0z" fill="#73aaea" /></g>,
  <g key="5"><path d="M1 1h7v6H1zM4 5h7v6H4z" fill="#2c3f85" stroke="#bcd2ef" /></g>,
  <g key="6"><path d="M2 2l3-1 3 4-1 5-3-3z" fill="#c9cfd6" /><path d="M9 3l2 8" stroke="#dfe5ea" /></g>,
  <g key="7"><circle cx="6" cy="6" r="6" fill="#c9de22" /><path d="M6 3v6M3 6h6" stroke="#28430a" strokeWidth="2" /></g>,
];

const Drawing = () => (
  <Canvas fill="none" role="img" aria-label="pd.dwg">
    <g transform="translate(-23 -71)">
      <g stroke="#a02a2c">
        <path d="M96 264.500H374" strokeDasharray="36 6 7 6" strokeDashoffset="18" />
        <path d="M424 264.500H876" strokeDasharray="36 6 7 6" strokeDashoffset="14" />
        <path d="M234.500 131V414" strokeDasharray="36 6 7 6" />
      </g>
      <g stroke="#fff" strokeWidth="2">
        <path d="M144 174h182v181H144z" />
        <circle cx="235" cy="265" r="46" />
        <path d="M473 174h182v181H473zM655 219h181v91H655" />
      </g>
      <g stroke="#bdbdbd">
        <path d="M30.500 510.500h9v9h-9zM35.500 510V461M31 473l4.500-12 4.500 12M32 470h7M40 515.500h50M79.500 511.500l11 4-11 4z" />
      </g>
      <g fill="#bdbdbd" fontFamily="Lato, sans-serif" fontWeight="300" fontSize="15">
        <text x="32" y="453">Y</text>
        <text x="98" y="521">X</text>
      </g>
    </g>
  </Canvas>
);

export default function App() {
  return (
    <Page>
      <GlobalStyle />
      <Header>
        <AppButton aria-label="应用程序菜单">
          <svg width="18" height="22" viewBox="0 0 18 22">
            <path d="M1 20L8 1l4 1 6 16-4 2-2-5-6 1-2 6z" fill="#d7262c" />
            <path d="M8 1l1 6-5 14-3-1z" fill="#f0766f" />
            <path d="M8 12l2-6 2 6z" fill="#7f0f14" />
            <path d="M12 2l6 16-4 2-4-13z" fill="#a5151b" />
          </svg>
          <Arrow />
        </AppButton>
        <HeaderRows>
          <TitleRow>
            <QuickButton aria-label="自定义快速访问工具栏"><Arrow /></QuickButton>
            <Title>{"AutoCAD 2010     pd.dwg"}</Title>
            <InfoCenter>
              <InfoToggle aria-label="折叠"><Arrow dir="right" /></InfoToggle>
              <Search aria-label="搜索" placeholder="键入关键字或短语" />
              <InfoIcons>
                {infoPaths.map((p, i) => (
                  <InfoButton key={i} $more={i === 0 || i === 4} aria-label={["搜索", "速博应用中心", "通讯中心", "收藏夹", "帮助"][i]}>
                    <svg width="11" height="11" viewBox="0 0 12 12" fill="#fff" stroke="#444" strokeWidth=".5">{p}</svg>
                  </InfoButton>
                ))}
              </InfoIcons>
            </InfoCenter>
            <WindowControls />
          </TitleRow>
          <MenuRow>
            <MenuBar>
              {menus.map((m) => (
                <MenuBarItem key={m}>
                  <MenuBarButton $open={m === "工具(T)"}>{m}</MenuBarButton>
                  {m === "工具(T)" && <Menu><MenuEntries items={toolsMenu} /></Menu>}
                </MenuBarItem>
              ))}
            </MenuBar>
            <WindowControls />
          </MenuRow>
        </HeaderRows>
      </Header>

      <ToolbarRow>
        <Toolbar $width={461}>
          <Tools names={["new", "open", "save", "|", "print", "preview", "publish", "cut", "copy", "|", "paste", "match", "block", "hand", "zoom", "|", "undo", "undo", "zoom", "zoom", "zoom", "zoom", "|", "|", "table", "sheets", "sheets", "markup", "calc", "help"]} />
        </Toolbar>
        <Toolbar $width={410} $gap={1}>
          <Tools names={["textstyle"]} />
          <Select label="文字样式" width={83} value="TH_GBDIM" indent={7} />
          <Tools names={["dimstyle"]} />
          <Select label="标注样式" width={85} value="3TH_GBDIM" indent={8} />
          <Tools names={["tablestyle"]} />
          <Select label="表格样式" width={85} value="Standard" />
          <ToolButton aria-label="多重引线样式" />
          <Select label="多重引线样式" width={85} value="Standard" indent={8} />
        </Toolbar>
      </ToolbarRow>
      <ToolbarRow>
        <Toolbar $width={157}>
          <Select label="工作空间" width={122} value="AutoCAD 经典" />
          <Tools names={["gear", "workspace"]} />
        </Toolbar>
        <Toolbar $width={270}>
          <Tools names={["layers"]} />
          <Select label="图层" width={204} value="0">
            {["bulb", "sun", "freeze", "lock", "cyan"].map((n) => <Icon key={n} name={n} size={10} />)}
          </Select>
          <Tools names={["layerprev", "layerstate"]} />
        </Toolbar>
        <Toolbar $width={398} $gap={4}>
          <Select label="颜色" width={104} value="ByLayer" serif><Icon name="cyan" size={10} /></Select>
          <Select label="线型" width={111} value="ByLayer" serif><LinePreview width={41} /></Select>
          <Select label="线宽" width={86} value="ByLayer" serif><LinePreview width={24} /></Select>
          <Select label="打印样式" width={84} value="BYCOLOR" serif off />
        </Toolbar>
      </ToolbarRow>

      <Workspace>
        <Dock><ToolPalette names={drawTools} length={294} /></Dock>
        <DrawingPane>
          <DrawingRow>
            <Drawing />
            <VScroll><Arrow dir="up" /><VThumb /><Arrow /></VScroll>
          </DrawingRow>
          <LayoutBar>
            <TabNav>
              {["left", "left", "right", "right"].map((d, i) => (
                <TabNavButton key={i} aria-label={["第一个", "上一个", "下一个", "最后一个"][i]}><Arrow dir={d} color="#999" /></TabNavButton>
              ))}
            </TabNav>
            <LayoutTab $active>模型</LayoutTab>
            <LayoutTab>布局1</LayoutTab>
            <TabSlash />
            <LayoutTab>布局2</LayoutTab>
            <TabSlash />
            <HScroll><Splitter /><Arrow dir="left" /></HScroll>
          </LayoutBar>
        </DrawingPane>
        <Dock $right>
          <ToolPalette names={modifyTools} length={263} />
          <ToolPalette names={orderTools} length={66} />
        </Dock>
      </Workspace>

      <CommandWindow>
        <CommandGrip />
        <CommandBody>
          <History>{"命令: _appload\n命令: *取消*"}</History>
          <CommandLine>命令:<CommandInput /></CommandLine>
        </CommandBody>
        <CommandScroll><Arrow dir="up" /><Arrow /></CommandScroll>
      </CommandWindow>
      <StatusBar>加载和卸载应用程序，定义要在启动时加载的应用程序</StatusBar>

      <Taskbar>
        <Start>
          <svg width="15" height="12" viewBox="0 0 15 12" fill="#fff">
            <path d="M0 4c3-3 5-2 7-1L5 7C3 6 2 6 0 7zM8 3c2 1 4 1 7-1l-3 5c-2 1-4 1-6 0zM4 8c2-1 3 0 5 1 1 0 2 0 3-1l-2 3c-2 1-4 1-6-1z" />
          </svg>
          start
        </Start>
        <QuickLaunch>
          {launchers.map((g, i) => <LaunchButton key={i} aria-label={`快速启动 ${i + 1}`}><svg width="12" height="12" viewBox="0 0 12 12">{g}</svg></LaunchButton>)}
        </QuickLaunch>
        <Tasks>
          <Task>
            <svg width="9" height="10" viewBox="0 0 10 10"><circle cx="5" cy="5" r="5" fill="#35a9e4" /><path d="M2 7l5-5 1 3-4 3z" fill="#fff" /></svg>
            <span>CAD如何标注_百度...</span>
          </Task>
          <Task>
            <svg width="10" height="10" viewBox="0 0 10 10"><path d="M0 1h4l1 2h5v6H0z" fill="#f2d75c" /><path d="M2 4h8v5H2z" fill="#fbea8f" /></svg>
            <span>6 Windows Explorer</span>
            <svg width="5" height="4" viewBox="0 0 6 4"><path d="M0 0h6L3 4z" fill="#fff" /></svg>
          </Task>
          <Task $active>
            <svg width="10" height="11" viewBox="0 0 10 11"><path d="M0 2h8l2 2v7H0z" fill="#f3dada" /><path d="M0 6L3 0l1 3 2-3 3 7-3-1-2 1-2-1z" fill="#cb2630" /></svg>
            <span>AutoCAD 2010 - [pd.d...</span>
          </Task>
        </Tasks>
        <Tray>
          {trayIcons.map((g, i) => <svg key={i} width="11" height="11" viewBox="0 0 12 12">{g}</svg>)}
          <Clock>10:29</Clock>
        </Tray>
      </Taskbar>

      <Bumps width="32" height="10" viewBox="0 0 32 10" fill="#b8b8b8">
        <circle cx="8" cy="6" r="6" /><circle cx="25" cy="7" r="6" />
      </Bumps>
      <Balloon>
        <BalloonClose aria-label="关闭">
          <svg width="6" height="6" viewBox="0 0 6 6" stroke="#111" strokeWidth="2"><path d="M0 0l6 6M6 0L0 6" /></svg>
        </BalloonClose>
        <BalloonLink href="#info">细信息...</BalloonLink>
        <BalloonTail width="12" height="14" viewBox="0 0 12 14"><path d="M1 0v1l9 12V0" fill="#ffffe1" /><path d="M1 1l9 12V1" fill="none" stroke="#333" /></BalloonTail>
      </Balloon>
      <Brand>
        <svg width="35" height="36" viewBox="0 0 35 36" fill="none" stroke="#c9cdd7" strokeWidth="3" strokeLinejoin="round">
          <path d="M8 6c0-5 4-5 7-3l15 9c5 3 5 8 0 11l-12 8c-4 3-10 2-10-3z" />
          <path d="M3 8v19c0 5 4 8 9 7" strokeWidth="2" />
          <path d="M14 13l7 5-7 5z" fill="#c9cdd7" stroke="none" />
          <path d="M23 14v8" strokeWidth="2" />
        </svg>
        <BrandText>
          <BrandName>溜溜自学</BrandName>
          <BrandUrl>ZiXUe.3D66.COM</BrandUrl>
        </BrandText>
      </Brand>
    </Page>
  );
}
